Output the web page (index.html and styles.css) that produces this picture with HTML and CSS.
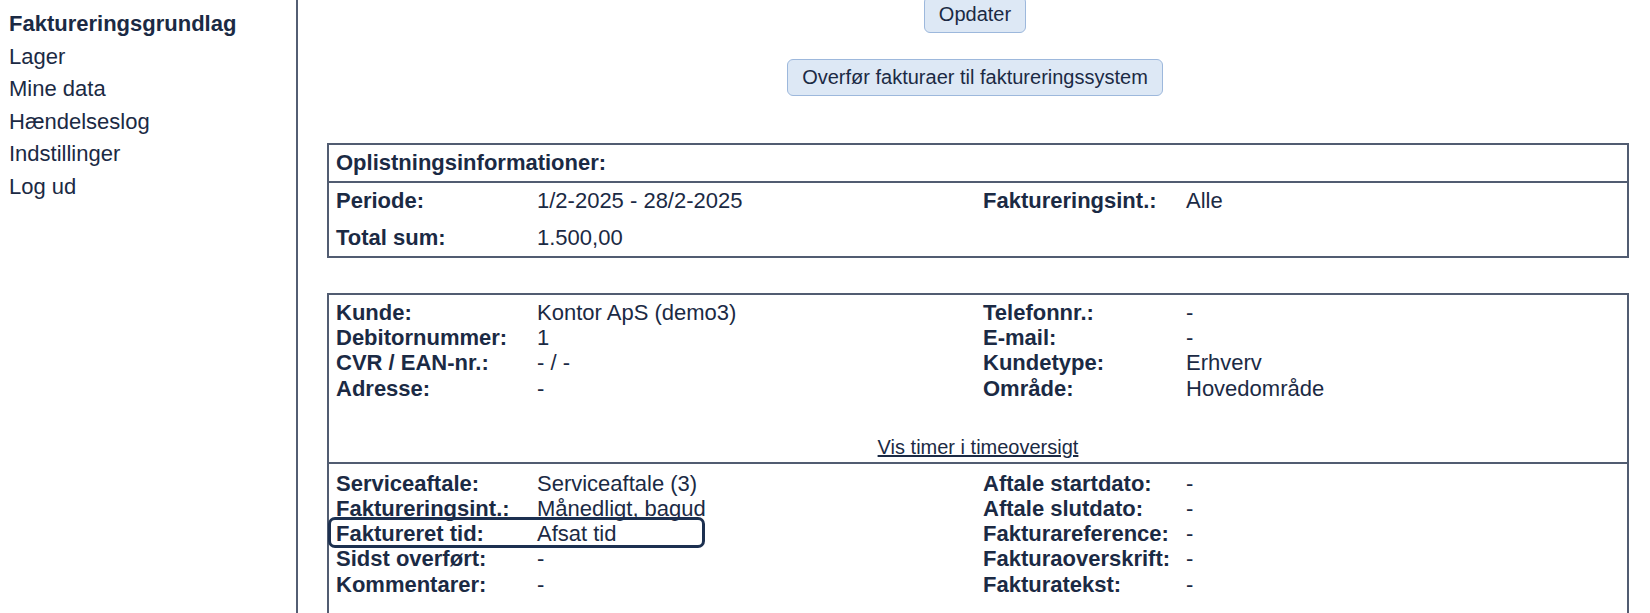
FILE: index.html
```html
<!DOCTYPE html>
<html lang="da">
<head>
<meta charset="utf-8">
<title>Faktureringsgrundlag</title>
<link rel="stylesheet" href="styles.css">
</head>
<body>
<div class="page">
  <nav class="sidebar">
    <a class="nav-item active" href="#">Faktureringsgrundlag</a>
    <a class="nav-item" href="#">Lager</a>
    <a class="nav-item" href="#">Mine data</a>
    <a class="nav-item" href="#">Hændelseslog</a>
    <a class="nav-item" href="#">Indstillinger</a>
    <a class="nav-item" href="#">Log ud</a>
  </nav>
  <main class="content">
    <div class="actions">
      <button class="btn" type="button">Opdater</button>
      <button class="btn" type="button">Overfør fakturaer til faktureringssystem</button>
    </div>

    <section class="panel summary">
      <div class="panel-head">Oplistningsinformationer:</div>
      <div class="panel-body loose">
        <div class="row"><span class="lbl">Periode:</span><span>1/2-2025 - 28/2-2025</span><span class="lbl">Faktureringsint.:</span><span>Alle</span></div>
        <div class="row"><span class="lbl">Total sum:</span><span>1.500,00</span><span></span><span></span></div>
      </div>
    </section>

    <section class="panel customer">
      <div class="panel-body tight top">
        <div class="row"><span class="lbl">Kunde:</span><span>Kontor ApS (demo3)</span><span class="lbl">Telefonnr.:</span><span>-</span></div>
        <div class="row"><span class="lbl">Debitornummer:</span><span>1</span><span class="lbl">E-mail:</span><span>-</span></div>
        <div class="row"><span class="lbl">CVR / EAN-nr.:</span><span>- / -</span><span class="lbl">Kundetype:</span><span>Erhverv</span></div>
        <div class="row"><span class="lbl">Adresse:</span><span>-</span><span class="lbl">Område:</span><span>Hovedområde</span></div>
        <div class="link-row"><a href="#">Vis timer i timeoversigt</a></div>
      </div>
      <div class="panel-body tight service">
        <div class="row"><span class="lbl">Serviceaftale:</span><span>Serviceaftale (3)</span><span class="lbl">Aftale startdato:</span><span>-</span></div>
        <div class="row"><span class="lbl">Faktureringsint.:</span><span>Månedligt, bagud</span><span class="lbl">Aftale slutdato:</span><span>-</span></div>
        <div class="row highlight"><span class="lbl">Faktureret tid:</span><span>Afsat tid</span><span class="lbl">Fakturareference:</span><span>-</span></div>
        <div class="row"><span class="lbl">Sidst overført:</span><span>-</span><span class="lbl">Fakturaoverskrift:</span><span>-</span></div>
        <div class="row"><span class="lbl">Kommentarer:</span><span>-</span><span class="lbl">Fakturatekst:</span><span>-</span></div>
      </div>
    </section>
  </main>
</div>
</body>
</html>
```
FILE: styles.css
```css
html, body {
  margin: 0;
  padding: 0;
  background: #ffffff;
}

body {
  font-family: "Liberation Sans", Arial, Helvetica, sans-serif;
  font-size: 22px;
  color: #1b2a44;
}

.page {
  display: flex;
  height: 100vh;
  overflow: hidden;
}

/* Sidebar */
.sidebar {
  box-sizing: border-box;
  width: 298px;
  flex: 0 0 298px;
  padding: 8px 0 0 9px;
  border-right: 2px solid #535e73;
  display: flex;
  flex-direction: column;
  line-height: 32.6px;
}

.nav-item {
  color: #1b2a44;
  text-decoration: none;
}

.nav-item.active {
  font-weight: bold;
}

/* Main content */
.content {
  flex: 1;
  min-width: 0;
  padding: 0 21px 0 29px;
  display: flex;
  flex-direction: column;
}

.actions {
  margin-top: -4px;
  display: flex;
  flex-direction: column;
  align-items: center;
  gap: 26px;
  padding-right: 6px;
}

.btn {
  font-family: "Liberation Sans", Arial, Helvetica, sans-serif;
  font-size: 20px;
  line-height: 23px;
  color: #1b2a44;
  background: #dde8f5;
  border: 1px solid #9db8dc;
  border-radius: 6px;
  padding: 6px 14px;
  cursor: pointer;
}

/* Panels */
.panel {
  border: 2px solid #515c71;
}

.summary {
  margin-top: 47px;
}

.customer {
  margin-top: 35px;
  border-bottom: none;
}

.panel-head {
  font-weight: bold;
  line-height: 25px;
  padding: 5px 7px 6px;
  border-bottom: 2px solid #515c71;
}

.panel-body {
  padding: 0 7px;
  display: flex;
  flex-direction: column;
}

.panel-body.loose {
  line-height: 25px;
  padding-top: 5px;
  padding-bottom: 6px;
  gap: 12px;
}

.panel-body.tight {
  line-height: 25.2px;
}

.panel-body.top {
  padding-top: 5px;
  padding-bottom: 3px;
  border-bottom: 2px solid #515c71;
}

.panel-body.service {
  padding-top: 7px;
  padding-bottom: 40px;
}

.row {
  display: grid;
  grid-template-columns: 201px 446px 203px 1fr;
}

.lbl {
  font-weight: bold;
}

.link-row {
  margin-top: 35px;
  text-align: center;
  font-size: 20px;
  line-height: 23px;
}

.link-row a {
  color: #1b2a44;
  text-decoration: underline;
}

/* Annotation highlight over a row */
.row.highlight {
  position: relative;
}

.row.highlight::after {
  content: "";
  position: absolute;
  left: -8px;
  top: -4px;
  width: 377px;
  height: 31px;
  box-sizing: border-box;
  border: 3px solid #1c3050;
  border-radius: 7px;
  pointer-events: none;
}
```
